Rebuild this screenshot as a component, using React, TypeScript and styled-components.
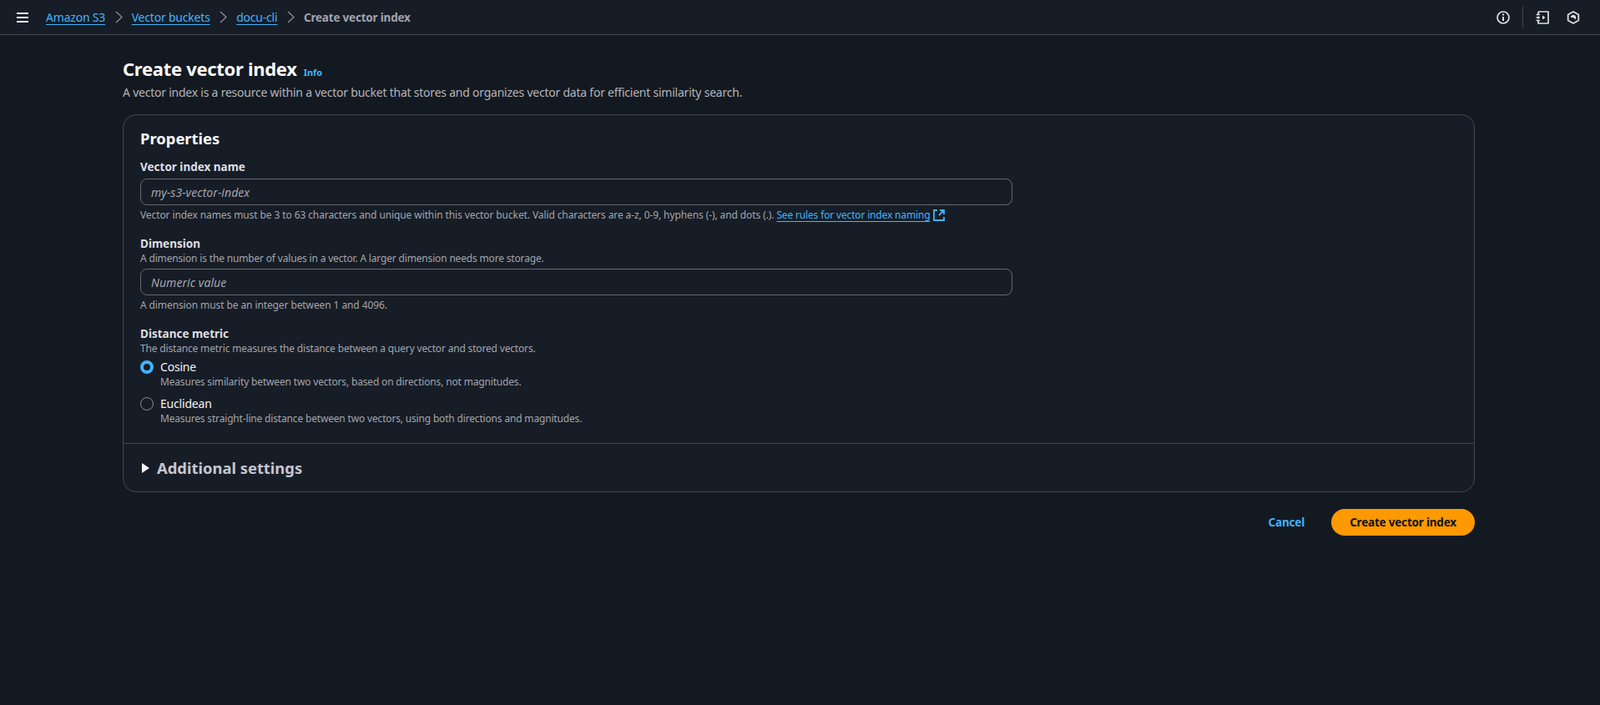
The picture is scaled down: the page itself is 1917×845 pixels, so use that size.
import React from "react";
import styled, { createGlobalStyle } from "styled-components";

const Global = createGlobalStyle`
  html, body { margin: 0; padding: 0; background: #131920; }
  body { font-family: "Noto Sans", "Open Sans", sans-serif; font-size: 14px; color: #f3f3f7; }
  * { box-sizing: border-box; }
`;

const Page = styled.div`
  min-height: 845px;
  background: #131920;
`;
const TopBar = styled.header`
  height: 42px;
  background: #161d26;
  border-bottom: 1px solid #424650;
  display: flex;
  align-items: center;
  padding: 0 20px;
`;
const IconSlot = styled.span<{ $color?: string }>`
  display: inline-flex;
  color: ${(p) => p.$color || "#dedee3"};
`;
const Crumbs = styled.nav`
  display: flex;
  align-items: center;
  margin-left: 21px;
  flex: 1;
`;
const Crumb = styled.a`
  color: #42b4ff;
  font-size: 14px;
  line-height: 20px;
  letter-spacing: -0.2px;
  text-decoration: underline;
  text-underline-offset: 3px;
  text-decoration-thickness: 1px;
`;
const CrumbSep = styled.span`
  display: inline-flex;
  color: #8c8c94;
  margin: 0 11px 0 11.5px;
`;
const CurrentCrumb = styled.span`
  color: #a4a4ad;
  font-weight: 700;
  font-size: 13.5px;
  letter-spacing: -0.2px;
`;
const TopActions = styled.div`
  display: flex;
  align-items: center;
  margin-right: 4px;
`;
const TopDivider = styled.span`
  width: 1px;
  height: 26px;
  background: #424650;
  margin: 0 15px 0 15px;
`;
const ActionGap = styled.span`
  width: 21px;
`;
const Content = styled.main`
  padding: 22px 150px 0 147px;
`;
const TitleRow = styled.div`
  display: flex;
  align-items: baseline;
  gap: 8px;
  height: 37px;
  line-height: 37px;
`;
const Title = styled.h1`
  margin: 0;
  font-size: 22px;
  letter-spacing: -0.3px;
  font-weight: 700;
  color: #f9f9fb;
`;
const InfoLink = styled.a`
  font-size: 11px;
  font-weight: 700;
  color: #42b4ff;
`;
const Description = styled.p`
  margin: 0 0 16px;
  font-size: 14px;
  line-height: 20px;
  letter-spacing: -0.23px;
  color: #b4b4bb;
`;
const Card = styled.section`
  background: #161d26;
  border: 1px solid #424650;
  border-radius: 16px;
`;
const CardBody = styled.div`
  padding: 15px 20px 21px;
`;
const CardTitle = styled.h2`
  margin: 0 0 11px;
  font-size: 18.4px;
  line-height: 26px;
  font-weight: 700;
  color: #f9f9fb;
`;
const Field = styled.div<{ $gap?: number }>`
  margin-bottom: ${(p) => p.$gap ?? 0}px;
`;
const Label = styled.label`
  display: block;
  font-size: 13.5px;
  line-height: 20px;
  font-weight: 700;
  color: #dedee3;
`;
const Hint = styled.div<{ $spacing?: number }>`
  font-size: 12px;
  line-height: 16px;
  letter-spacing: ${(p) => p.$spacing ?? -0.17}px;
  color: #a4a4ad;
`;
const Input = styled.input`
  display: block;
  width: 1045px;
  height: 32px;
  margin: 4px 0;
  padding: 0 12px;
  background: #161d26;
  border: 1px solid #656871;
  border-radius: 8px;
  font: italic 14px "Noto Sans", sans-serif;
  letter-spacing: 0.05px;
  &::placeholder { color: #a4a4ad; opacity: 1; }
`;
const HintLink = styled.a`
  color: #42b4ff;
  letter-spacing: -0.16px;
  text-decoration: underline;
  text-underline-offset: 3px;
`;
const ExtIcon = styled.span`
  display: inline-flex;
  vertical-align: -3px;
  margin-left: 4px;
  color: #42b4ff;
`;
const RadioRow = styled.div<{ $first?: boolean }>`
  display: flex;
  gap: 8px;
  margin-top: ${(p) => (p.$first ? 4 : 8)}px;
`;
const RadioMark = styled.span<{ $on?: boolean }>`
  flex: none;
  width: 16px;
  height: 16px;
  margin-top: 2px;
  border-radius: 50%;
  background: ${(p) => (p.$on ? "#161d26" : "transparent")};
  border: ${(p) => (p.$on ? "4px solid #42b4ff" : "1px solid #8c8c94")};
`;
const RadioText = styled.div`
  color: #f3f3f7;
  font-size: 14px;
  line-height: 20px;
  letter-spacing: -0.2px;
`;
const Divider = styled.div`
  height: 1px;
  background: #424650;
`;
const Expander = styled.div`
  height: 57px;
  padding-left: 22px;
  display: flex;
  align-items: center;
  gap: 9px;
  color: #c6c6cd;
`;
const ExpanderTitle = styled.span`
  font-size: 18.4px;
  font-weight: 700;
`;
const Footer = styled.div`
  display: flex;
  justify-content: flex-end;
  align-items: center;
  gap: 32px;
  margin-top: 20px;
`;
const Cancel = styled.a`
  font-size: 13.5px;
  font-weight: 700;
  letter-spacing: -0.2px;
  color: #42b4ff;
`;
const Primary = styled.button`
  width: 172px;
  height: 32px;
  border: 0;
  border-radius: 16px;
  background: #ff9900;
  color: #0f141a;
  font: 700 13.5px "Noto Sans", sans-serif;
  letter-spacing: -0.2px;
`;

export default function App() {
  return (
    <Page>
      <Global />
      <TopBar>
        <IconSlot $color="#f3f3f7">
          <svg width="14" height="14" viewBox="0 0 14 14" fill="none" stroke="currentColor" strokeWidth="1.8">
            <path d="M0 2h14M0 7h14M0 12h14" />
          </svg>
        </IconSlot>
        <Crumbs>
          <Crumb>Amazon S3</Crumb>
          <CrumbSep><Chevron /></CrumbSep>
          <Crumb>Vector buckets</Crumb>
          <CrumbSep><Chevron /></CrumbSep>
          <Crumb>docu-cli</Crumb>
          <CrumbSep><Chevron /></CrumbSep>
          <CurrentCrumb>Create vector index</CurrentCrumb>
        </Crumbs>
        <TopActions>
          <IconSlot>
            <svg width="16" height="16" viewBox="0 0 16 16" fill="none" stroke="currentColor" strokeWidth="1.7">
              <circle cx="8" cy="8" r="7" />
              <path d="M8 7v5M8 3.500v2" strokeWidth="2" />
            </svg>
          </IconSlot>
          <TopDivider />
          <IconSlot>
            <svg width="16" height="16" viewBox="0 0 16 16" fill="none" stroke="currentColor" strokeWidth="1.7">
              <path d="M3 1h12v14H3v-3M3 9.500v-3M3 4V1" strokeLinejoin="round" />
              <path d="M0.500 4.500h4.500M0.500 8h4.500M0.500 11.500h4.500" />
              <path d="M8 5.500l3.500 2.500L8 10.500z" fill="currentColor" stroke="none" />
            </svg>
          </IconSlot>
          <ActionGap />
          <IconSlot>
            <svg width="16" height="16" viewBox="0 0 16 16" fill="none" stroke="currentColor" strokeWidth="1.8">
              <path d="M8 1l6.300 3.500v7L8 15l-6.300-3.500v-7z" strokeLinejoin="round" />
              <path d="M4.800 8a3.200 3.200 0 1 1 5.400 2.300L8 8z" fill="currentColor" stroke="none" />
            </svg>
          </IconSlot>
        </TopActions>
      </TopBar>
      <Content>
        <TitleRow>
          <Title>Create vector index</Title>
          <InfoLink>Info</InfoLink>
        </TitleRow>
        <Description>
          A vector index is a resource within a vector bucket that stores and organizes vector data for efficient similarity search.
        </Description>
        <Card>
          <CardBody>
            <CardTitle>Properties</CardTitle>
            <Field $gap={16}>
              <Label>Vector index name</Label>
              <Input placeholder="my-s3-vector-index" />
              <Hint $spacing={-0.1}>
                Vector index names must be 3 to 63 characters and unique within this vector bucket. Valid characters are a-z, 0-9, hyphens (-), and dots (.).{" "}
                <HintLink>See rules for vector index naming</HintLink>
                <ExtIcon>
                  <svg width="14" height="14" viewBox="0 0 14 14" fill="none" stroke="currentColor" strokeWidth="1.800">
                    <path d="M5 1H1v12h12V9M8 1h5v5M13 1L7 7" />
                  </svg>
                </ExtIcon>
              </Hint>
            </Field>
            <Field $gap={16}>
              <Label>Dimension</Label>
              <Hint>A dimension is the number of values in a vector. A larger dimension needs more storage.</Hint>
              <Input placeholder="Numeric value" />
              <Hint $spacing={-0.1}>A dimension must be an integer between 1 and 4096.</Hint>
            </Field>
            <Field>
              <Label>Distance metric</Label>
              <Hint>The distance metric measures the distance between a query vector and stored vectors.</Hint>
              <RadioRow $first>
                <RadioMark $on />
                <div>
                  <RadioText>Cosine</RadioText>
                  <Hint>Measures similarity between two vectors, based on directions, not magnitudes.</Hint>
                </div>
              </RadioRow>
              <RadioRow>
                <RadioMark />
                <div>
                  <RadioText>Euclidean</RadioText>
                  <Hint>Measures straight-line distance between two vectors, using both directions and magnitudes.</Hint>
                </div>
              </RadioRow>
            </Field>
          </CardBody>
          <Divider />
          <Expander>
            <svg width="9" height="12" viewBox="0 0 9 12" fill="#f3f3f7">
              <path d="M0 0l9 6-9 6z" />
            </svg>
            <ExpanderTitle>Additional settings</ExpanderTitle>
          </Expander>
        </Card>
        <Footer>
          <Cancel>Cancel</Cancel>
          <Primary>Create vector index</Primary>
        </Footer>
      </Content>
    </Page>
  );
}

function Chevron() {
  return (
    <svg width="9" height="15" viewBox="0 0 9 15" fill="none" stroke="currentColor" strokeWidth="1.300">
      <path d="M1 1l7 6.500-7 6.500" />
    </svg>
  );
}
